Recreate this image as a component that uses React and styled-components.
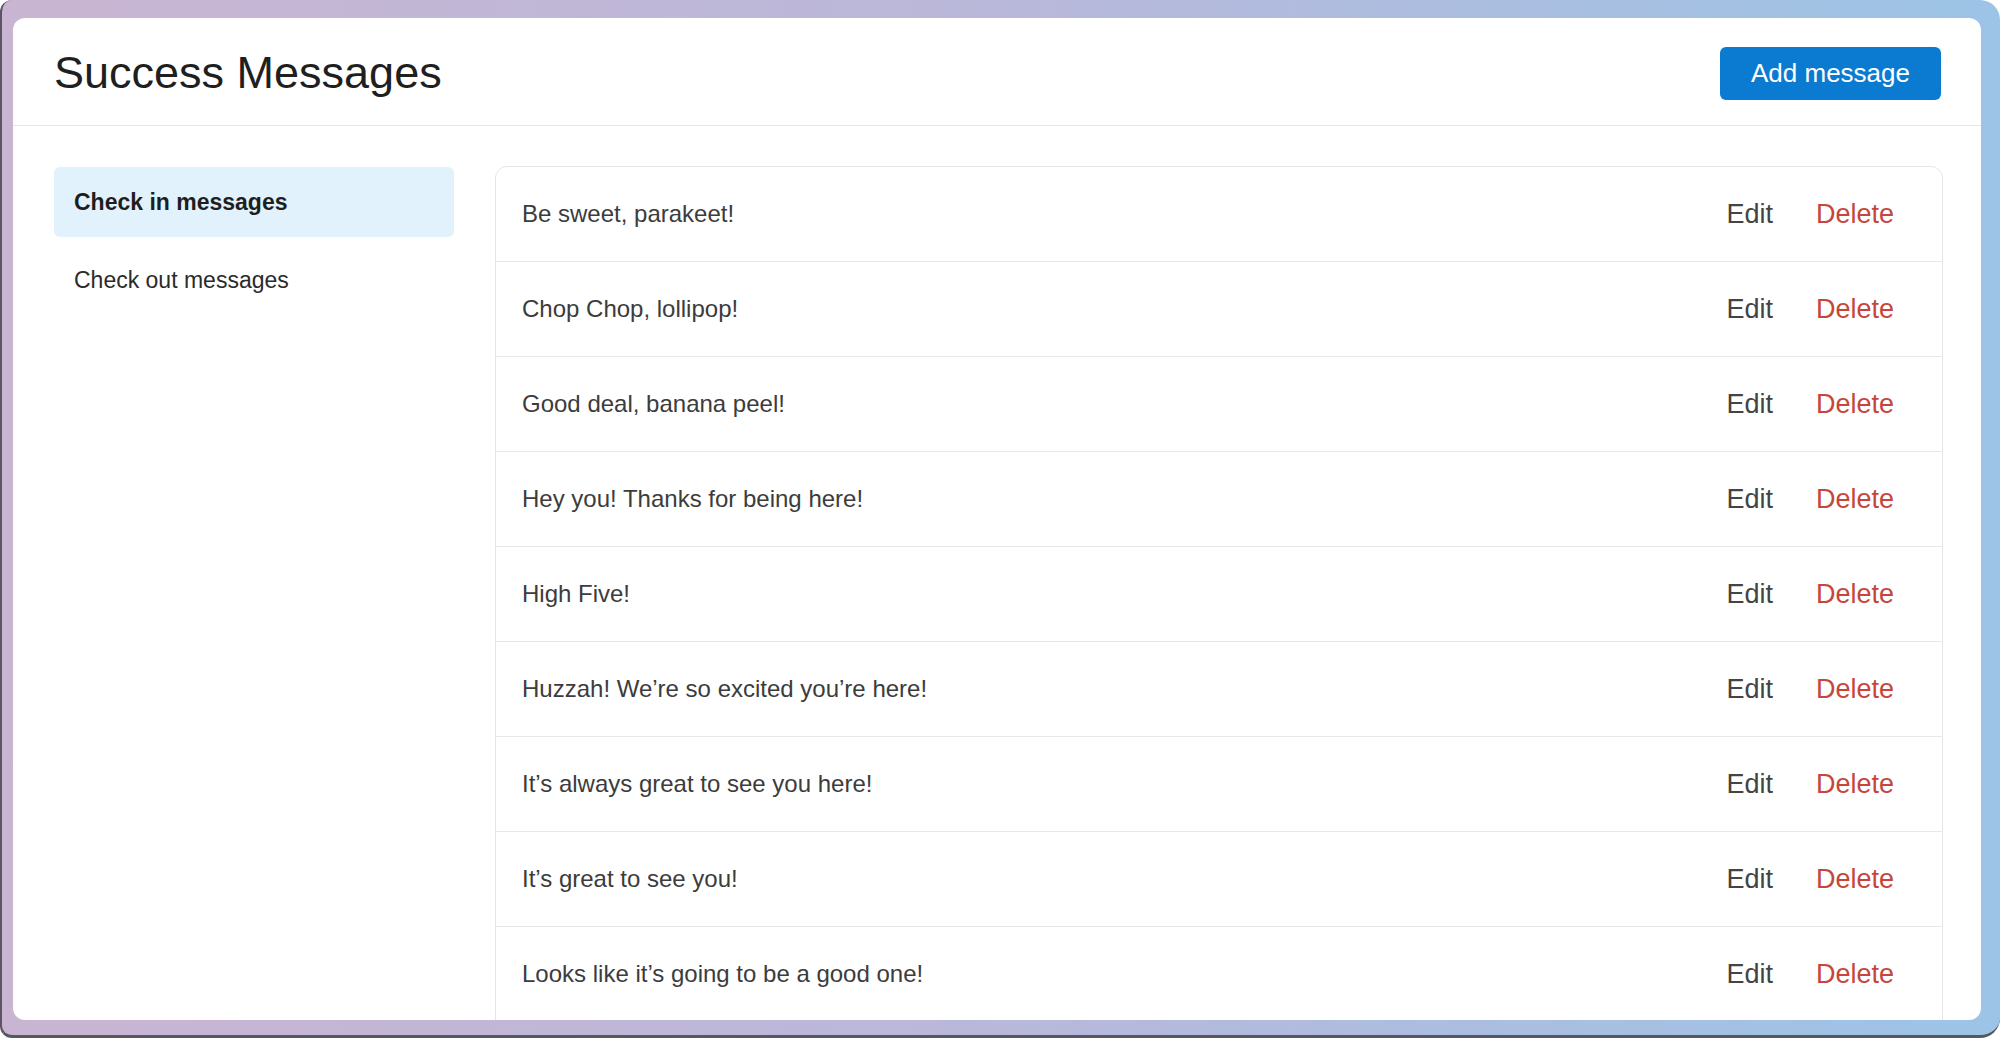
import React from 'react';
import styled, { createGlobalStyle } from 'styled-components';

const GlobalStyle = createGlobalStyle`
  html, body {
    margin: 0;
    padding: 0;
    background: #ffffff;
  }
  body {
    font-family: 'Liberation Sans', Arial, sans-serif;
    -webkit-font-smoothing: antialiased;
  }
  * {
    box-sizing: border-box;
  }
`;

const Frame = styled.div`
  width: 2000px;
  height: 1038px;
  padding: 18px 19px 15px 11px;
  background: linear-gradient(90deg, #c9b5d2 0%, #b9b8da 50%, #9cc4e6 100%);
  border-radius: 12px 20px 20px 12px;
  border-left: 2px solid #5a5560;
  border-bottom: 3px solid #55585e;
  overflow: hidden;
`;

const Panel = styled.div`
  height: 100%;
  background: #ffffff;
  border-radius: 12px;
  overflow: hidden;
  display: flex;
  flex-direction: column;
`;

const Header = styled.header`
  flex: none;
  height: 108px;
  padding: 3px 40px 0 41px;
  display: flex;
  align-items: center;
  justify-content: space-between;
  border-bottom: 1px solid #e6e6e6;
`;

const Title = styled.h1`
  margin: 0;
  font-size: 45px;
  font-weight: 400;
  color: #1f1f1f;
  letter-spacing: 0;
`;

const PrimaryButton = styled.button`
  width: 221px;
  height: 53px;
  border: none;
  border-radius: 6px;
  background: #0a7bd1;
  color: #ffffff;
  font-family: inherit;
  font-size: 26px;
  cursor: pointer;
`;

const Body = styled.div`
  flex: 1;
  min-height: 0;
  display: flex;
  gap: 41px;
  padding: 40px 38px 0 41px;
`;

const Sidebar = styled.nav`
  flex: none;
  width: 400px;
  padding-top: 1px;
  display: flex;
  flex-direction: column;
  gap: 8px;
`;

const NavItem = styled.div`
  height: 70px;
  padding-left: 20px;
  display: flex;
  align-items: center;
  border-radius: 6px;
  font-size: 23px;
  font-weight: ${(p) => (p.active ? 700 : 400)};
  color: ${(p) => (p.active ? '#1e1e1e' : '#2b2b2b')};
  background: ${(p) => (p.active ? '#e1f2fd' : 'transparent')};
  cursor: pointer;
`;

/* the list runs on below the window, so let it overflow and be clipped */
const Card = styled.div`
  flex: 1;
  margin-bottom: -24px;
  border: 1px solid #e5e5e5;
  border-radius: 12px;
  overflow: hidden;
`;

const Row = styled.div`
  height: 95px;
  padding: 0 48px 0 26px;
  display: flex;
  align-items: center;
  border-bottom: 1px solid #e8e8e8;
`;

const MessageText = styled.span`
  flex: 1;
  font-size: 24px;
  color: #3c3c3c;
`;

const Actions = styled.div`
  display: flex;
  align-items: center;
  gap: 43px;
`;

const ActionLink = styled.span`
  font-size: 27px;
  color: ${(p) => (p.danger ? '#c6463b' : '#444444')};
  cursor: pointer;
`;

const messages = [
  'Be sweet, parakeet!',
  'Chop Chop, lollipop!',
  'Good deal, banana peel!',
  'Hey you! Thanks for being here!',
  'High Five!',
  'Huzzah! We\u2019re so excited you\u2019re here!',
  'It\u2019s always great to see you here!',
  'It\u2019s great to see you!',
  'Looks like it\u2019s going to be a good one!',
];

const App = () => (
  <>
    <GlobalStyle />
    <Frame>
      <Panel>
        <Header>
          <Title>Success Messages</Title>
          <PrimaryButton>Add message</PrimaryButton>
        </Header>
        <Body>
          <Sidebar>
            <NavItem active>Check in messages</NavItem>
            <NavItem>Check out messages</NavItem>
          </Sidebar>
          <Card>
            {messages.map((text) => (
              <Row key={text}>
                <MessageText>{text}</MessageText>
                <Actions>
                  <ActionLink>Edit</ActionLink>
                  <ActionLink danger>Delete</ActionLink>
                </Actions>
              </Row>
            ))}
          </Card>
        </Body>
      </Panel>
    </Frame>
  </>
);

export default App;
